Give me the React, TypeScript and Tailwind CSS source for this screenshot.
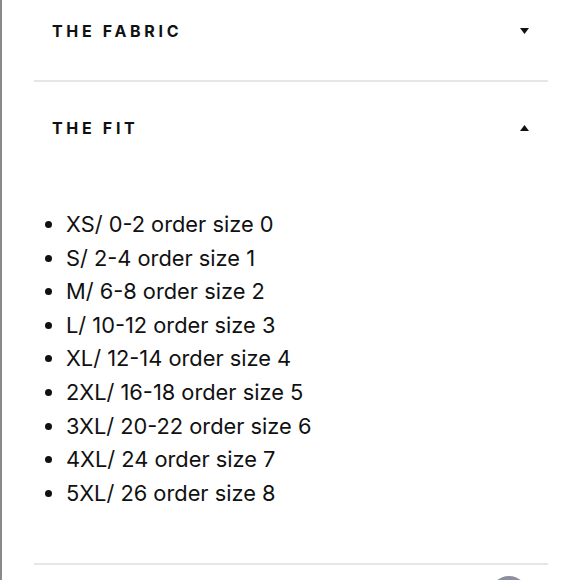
import React from "react";

const items = [
  "XS/ 0-2 order size 0",
  "S/ 2-4 order size 1",
  "M/ 6-8 order size 2",
  "L/ 10-12 order size 3",
  "XL/ 12-14 order size 4",
  "2XL/ 16-18 order size 5",
  "3XL/ 20-22 order size 6",
  "4XL/ 24 order size 7",
  "5XL/ 26 order size 8",
];

function Tri({ up }: { up?: boolean }) {
  return (
    <svg width="9" height="6" viewBox="0 0 9 6" className="block">
      {up ? <path d="M4.5 0L9 6H0z" fill="#111" /> : <path d="M0 0h9L4.5 6z" fill="#111" />}
    </svg>
  );
}

export default function App() {
  return (
    <div className="relative w-[580px] h-[580px] bg-white overflow-hidden border-l-2 border-[#8a8a8a]" style={{ fontFamily: "Inter, 'Liberation Sans', sans-serif" }}>
      <div className="pl-[32px] pr-[32px]">
        <div className="flex items-center justify-between h-[82px] border-b-2 border-[#e6e6e6] pl-[18px] pr-[19px] pb-[18px]">
          <span className="text-[16px] font-bold tracking-[0.23em] text-[#111]">THE FABRIC</span>
          <Tri />
        </div>
        <div className="flex items-center justify-between h-[90px] pl-[18px] pr-[19px] pt-[2px]">
          <span className="text-[16px] font-bold tracking-[0.23em] text-[#111]">THE FIT</span>
          <Tri up />
        </div>
        <ul className="pt-[36px] pb-[53px] pl-[33px] list-disc text-[21.8px] leading-[33.6px] text-[#111] border-b-2 border-[#e6e6e6]">
          {items.map((t) => (
            <li key={t} className="-ml-[1px]">{t}</li>
          ))}
        </ul>
      </div>
      <div className="absolute left-[488px] top-[576px] w-[38px] h-[38px] rounded-full bg-[#8c8fa0]" />
    </div>
  );
}
